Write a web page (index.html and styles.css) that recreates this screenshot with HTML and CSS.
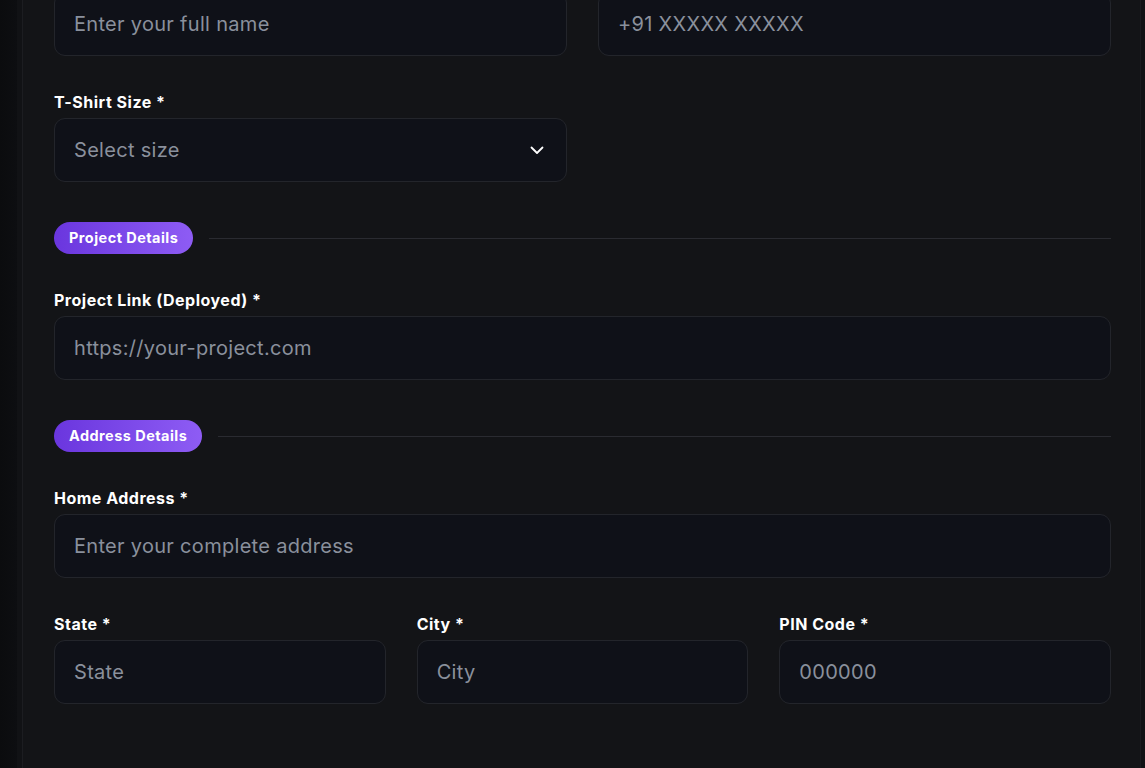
FILE: index.html
```html
<!DOCTYPE html>
<html lang="en">
<head>
  <meta charset="UTF-8" />
  <meta name="viewport" content="width=device-width, initial-scale=1.0" />
  <title>Registration</title>
  <link rel="stylesheet" href="styles.css">
</head>
<body>
  <div class="layout">
    <aside class="side"></aside>

    <main class="panel">
      <form class="form">
        <div class="row two">
          <div class="field">
            <input class="input" type="text" placeholder="Enter your full name">
          </div>
          <div class="field">
            <input class="input" type="tel" placeholder="+91 XXXXX XXXXX">
          </div>
        </div>

        <div class="row two">
          <div class="field">
            <label>T-Shirt Size *</label>
            <div class="select-wrap">
              <select class="input select">
                <option>Select size</option>
                <option>S</option>
                <option>M</option>
                <option>L</option>
                <option>XL</option>
              </select>
              <svg class="chevron" width="24" height="24" viewBox="0 0 24 24" fill="none" stroke="#fff" stroke-width="1.8" stroke-linecap="round" stroke-linejoin="round"><path d="M6.5 9.5l5.5 5.5 5.5-5.5"/></svg>
            </div>
          </div>
        </div>

        <div class="section">
          <span class="pill">Project Details</span>
          <span class="rule"></span>
        </div>

        <div class="row">
          <div class="field">
            <label>Project Link (Deployed) *</label>
            <input class="input" type="url" placeholder="https://your-project.com">
          </div>
        </div>

        <div class="section">
          <span class="pill">Address Details</span>
          <span class="rule"></span>
        </div>

        <div class="row">
          <div class="field">
            <label>Home Address *</label>
            <input class="input" type="text" placeholder="Enter your complete address">
          </div>
        </div>

        <div class="row three">
          <div class="field">
            <label>State *</label>
            <input class="input" type="text" placeholder="State">
          </div>
          <div class="field">
            <label>City *</label>
            <input class="input" type="text" placeholder="City">
          </div>
          <div class="field">
            <label>PIN Code *</label>
            <input class="input" type="text" placeholder="000000">
          </div>
        </div>
      </form>
    </main>

    <div class="edge"></div>
  </div>
</body>
</html>
```

FILE: styles.css
```css
* {
  box-sizing: border-box;
}
html, body {
  height: 100%;
}
body {
  margin: 0;
  background: #131417;
  color: #fff;
  font-family: Inter, "Noto Sans", Arial, sans-serif;
  overflow: hidden;
}
.layout {
  display: flex;
  height: 100%;
}
.side {
  width: 23px;
  flex-shrink: 0;
  background: linear-gradient(90deg, #0b0c0e 0, #0d0e11 17px, #111215 17px);
  border-right: 1px solid #1c1d21;
}
.edge {
  width: 5px;
  flex-shrink: 0;
  background: #111215;
  border-left: 1px solid #1a1b1f;
}
.panel {
  flex: 1;
  background: #131417;
  padding: 0 29px 0 31px;
}
.form {
  display: flex;
  flex-direction: column;
  margin-top: -8px;
}
.row {
  display: grid;
  gap: 31px;
  margin-bottom: 34px;
}
.row.two {
  grid-template-columns: 1fr 1fr;
}
.row.three {
  grid-template-columns: 1fr 1fr 1fr;
}
.field label {
  display: block;
  font-size: 16px;
  line-height: 24px;
  font-weight: 700;
  letter-spacing: 0.5px;
  margin-bottom: 4px;
}
.input {
  display: block;
  width: 100%;
  height: 64px;
  padding: 0 19px;
  background: #0f1118;
  border: 1px solid #23252b;
  border-radius: 11px;
  color: #fff;
  font-family: inherit;
  font-size: 20px;
  letter-spacing: 0.3px;
  outline: none;
}
.input::placeholder {
  color: #8a909c;
}
.select-wrap {
  position: relative;
}
.select {
  appearance: none;
  -webkit-appearance: none;
  color: #8a909c;
}
.chevron {
  position: absolute;
  right: 18px;
  top: 20px;
  pointer-events: none;
}
.section {
  display: flex;
  align-items: center;
  gap: 16px;
  margin: 6px 0 34px;
}
.pill {
  display: inline-block;
  padding: 0 15px;
  height: 32px;
  line-height: 32px;
  border-radius: 16px;
  background: linear-gradient(90deg, #6a36de, #8e5cf4);
  font-size: 14.5px;
  font-weight: 700;
  letter-spacing: 0.45px;
  white-space: nowrap;
}
.rule {
  flex: 1;
  height: 1px;
  background: #2a2b31;
}
```
